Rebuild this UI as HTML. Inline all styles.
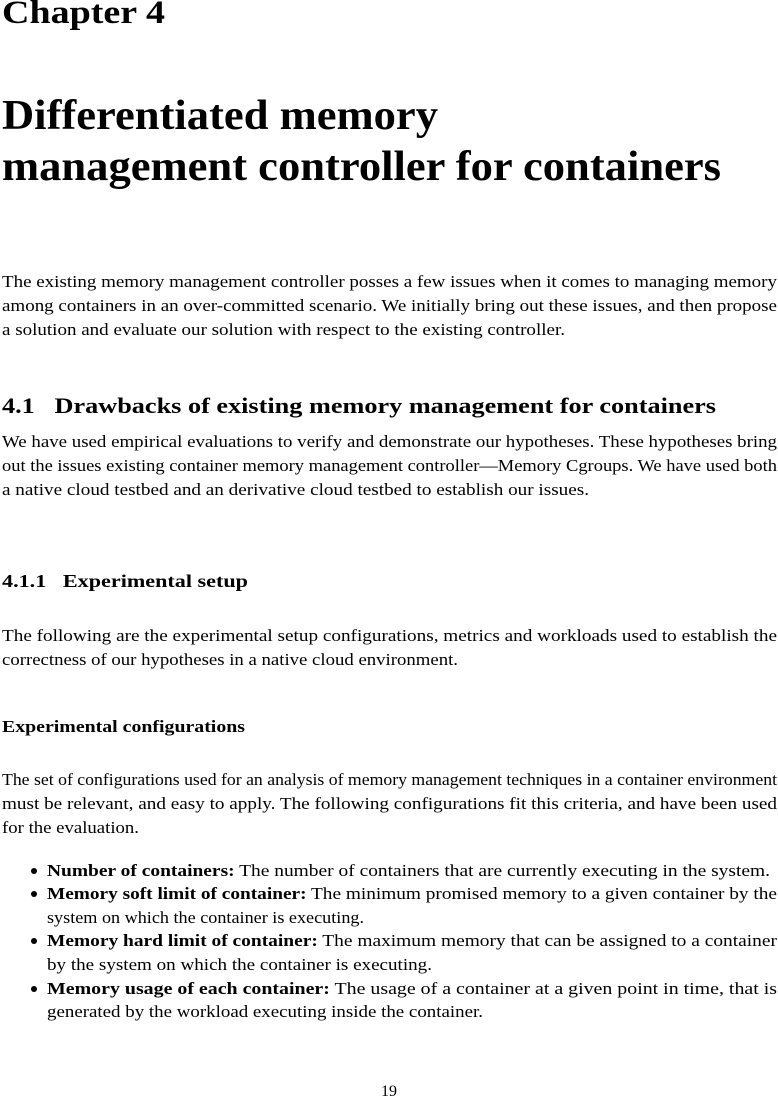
<!DOCTYPE html>
<html><head><meta charset="utf-8"><style>
body{margin:0;width:778px;height:1098px;background:#fff;position:relative;overflow:hidden;font-family:"Liberation Serif",serif;color:#000}
.l{position:absolute;left:2px;white-space:nowrap;font-size:16.5px;line-height:16px}
.j{width:775px}
.j>span{display:inline-block;transform-origin:0 50%}
.b{font-weight:bold}
.bi{left:47px;width:730px}
.dot{position:absolute;left:31px;width:6px;height:6px;border-radius:50%;background:#000}
</style></head><body>
<div class="l b j" style="top:-3px;font-size:33px;line-height:33px;width:163px"><span>Chapter 4</span></div>
<div class="l b j" style="top:95px;font-size:42px;line-height:42px;width:436px"><span>Differentiated memory</span></div>
<div class="l b j" style="top:146px;font-size:42px;line-height:42px;width:719px"><span>management controller for containers</span></div>

<div class="l j" style="top:274px"><span>The existing memory management controller posses a few issues when it comes to managing memory</span></div>
<div class="l j" style="top:298px"><span>among containers in an over-committed scenario. We initially bring out these issues, and then propose</span></div>
<div class="l j" style="top:322px;width:563px"><span>a solution and evaluate our solution with respect to the existing controller.</span></div>

<div class="l b j" style="top:395px;font-size:22px;line-height:22px;width:714px"><span>4.1&nbsp;&nbsp; Drawbacks of existing memory management for containers</span></div>

<div class="l j" style="top:434px"><span>We have used empirical evaluations to verify and demonstrate our hypotheses. These hypotheses bring</span></div>
<div class="l j" style="top:458px"><span>out the issues existing container memory management controller—Memory Cgroups. We have used both</span></div>
<div class="l j" style="top:482px;width:587px"><span>a native cloud testbed and an derivative cloud testbed to establish our issues.</span></div>

<div class="l b j" style="top:572px;font-size:18px;line-height:18px;width:246px"><span>4.1.1&nbsp;&nbsp; Experimental setup</span></div>

<div class="l j" style="top:628px"><span>The following are the experimental setup configurations, metrics and workloads used to establish the</span></div>
<div class="l j" style="top:652px;width:456px"><span>correctness of our hypotheses in a native cloud environment.</span></div>

<div class="l b j" style="top:719px;width:243px"><span>Experimental configurations</span></div>

<div class="l j" style="top:772px"><span>The set of configurations used for an analysis of memory management techniques in a container environment</span></div>
<div class="l j" style="top:796px"><span>must be relevant, and easy to apply. The following configurations fit this criteria, and have been used</span></div>
<div class="l j" style="top:820px;width:137px"><span>for the evaluation.</span></div>

<div class="dot" style="top:868px"></div>
<div class="l bi j" style="top:863px;width:723px"><span><b>Number of containers:</b> The number of containers that are currently executing in the system.</span></div>
<div class="dot" style="top:891px"></div>
<div class="l bi j" style="top:886px"><span><b>Memory soft limit of container:</b> The minimum promised memory to a given container by the</span></div>
<div class="l bi j" style="top:910px;width:317px"><span>system on which the container is executing.</span></div>
<div class="dot" style="top:938px"></div>
<div class="l bi j" style="top:933px"><span><b>Memory hard limit of container:</b> The maximum memory that can be assigned to a container</span></div>
<div class="l bi j" style="top:957px;width:385px"><span>by the system on which the container is executing.</span></div>
<div class="dot" style="top:986px"></div>
<div class="l bi j" style="top:981px"><span><b>Memory usage of each container:</b> The usage of a container at a given point in time, that is</span></div>
<div class="l bi j" style="top:1004px;width:436px"><span>generated by the workload executing inside the container.</span></div>

<div class="l" style="top:1084px;left:381px;font-size:16px">19</div>
<script>
document.querySelectorAll('.j').forEach(function(el){
  var s=el.firstElementChild; var w=s.getBoundingClientRect().width;
  var t=parseFloat(el.style.width)||el.clientWidth;
  if(w>0) s.style.transform='scaleX('+(t/w)+')';
});
</script>
</body></html>
